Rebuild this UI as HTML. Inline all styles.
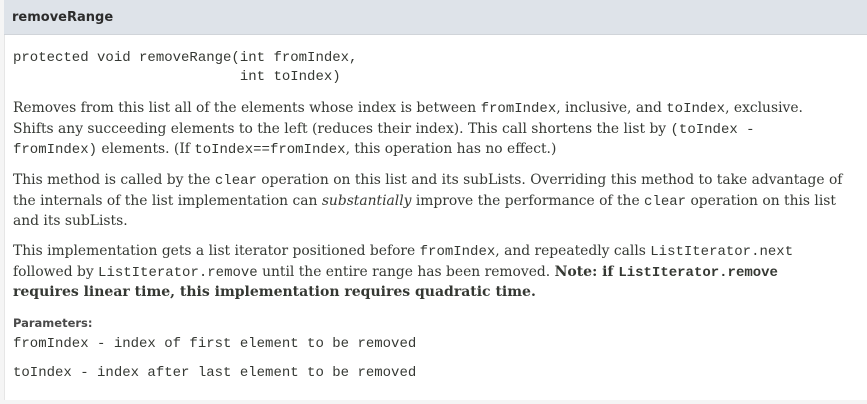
<!DOCTYPE html>
<html><head><style>
html,body{margin:0;padding:0;}
body{width:867px;height:404px;background:#f5f5f5;font-family:"DejaVu Serif","Liberation Serif",serif;color:#353833;font-size:13.85px;overflow:hidden;position:relative;}
.panel{position:absolute;left:4px;top:0;width:863px;height:400px;background:#fff;border-left:1px solid #e6e6e6;}
.hdr{position:absolute;left:4px;top:0;width:863px;height:34px;background:#dee3e9;border-bottom:1px solid #d0d4d9;}
.hdr span{position:absolute;left:8px;top:10px;font-family:"DejaVu Sans","Liberation Sans",sans-serif;font-weight:bold;font-size:13px;color:#2c2c2c;}
.t{position:absolute;left:13px;white-space:nowrap;line-height:19.5px;}
code,.m{font-family:"Liberation Mono",monospace;font-size:14px;}
.sig{position:absolute;left:13px;top:49px;font-family:"Liberation Mono",monospace;font-size:14px;line-height:19px;white-space:pre;color:#353833;}
.p{position:absolute;left:13px;top:316px;font-family:"DejaVu Sans","Liberation Sans",sans-serif;font-weight:bold;font-size:11.5px;color:#4a4a4a;}
b{font-size:14px;}
b code{font-size:14px;}
</style></head><body>
<div class="panel"></div>
<div class="hdr"><span>removeRange</span></div>
<div class="sig">protected void removeRange(int fromIndex,
                           int toIndex)</div>
<div class="t" style="top:99px">Removes from this list all of the elements whose index is between <code>fromIndex</code>, inclusive, and <code>toIndex</code>, exclusive.<br>Shifts any succeeding elements to the left (reduces their index). This call shortens the list by <code>(toIndex - </code><br><code>fromIndex)</code> elements. (If <code>toIndex==fromIndex</code>, this operation has no effect.)</div>
<div class="t" style="top:171px">This method is called by the <code>clear</code> operation on this list and its subLists. Overriding this method to take advantage of<br>the internals of the list implementation can <i>substantially</i> improve the performance of the <code>clear</code> operation on this list<br>and its subLists.</div>
<div class="t" style="top:242px">This implementation gets a list iterator positioned before <code>fromIndex</code>, and repeatedly calls <code>ListIterator.next</code><br>followed by <code>ListIterator.remove</code> until the entire range has been removed. <b>Note: if <code>ListIterator.remove</code></b><br><b>requires linear time, this implementation requires quadratic time.</b></div>
<div class="p">Parameters:</div>
<div class="t m" style="top:335px">fromIndex - index of first element to be removed</div>
<div class="t m" style="top:364px">toIndex - index after last element to be removed</div>
</body></html>
